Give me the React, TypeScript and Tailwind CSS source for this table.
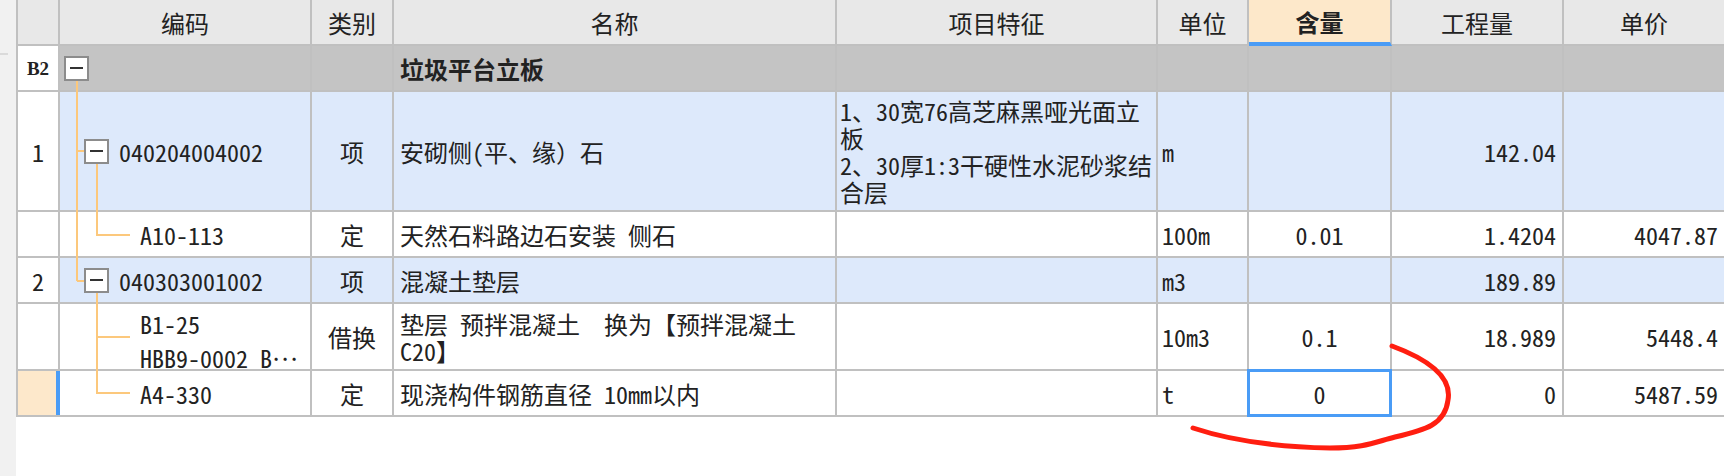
import React from "react";

const grid = "border-[#c0c0c0]";

function Cell({ className = "", children }: { className?: string; children?: React.ReactNode }) {
  return <div className={`h-full shrink-0 flex items-center border-r-2 ${grid} ${className}`}>{children}</div>;
}

function Minus() {
  return (
    <span className="w-[25px] h-[25px] shrink-0 border-2 border-[#8c8c8c] bg-white flex items-center justify-center">
      <span className="w-[13px] h-[2px] bg-[#333]" />
    </span>
  );
}

function RowNo({ children, active }: { children?: React.ReactNode; active?: boolean }) {
  if (active) {
    return <div className="h-full w-[44px] shrink-0 border-l-2 border-l-[#c0c0c0] border-r-4 border-r-[#4a9cf6] bg-[#fde8cb]" />;
  }
  return (
    <div className={`h-full w-[44px] shrink-0 border-l-2 border-r-2 ${grid} bg-white flex items-center justify-center`}>
      {children}
    </div>
  );
}

export default function App() {
  return (
    <div className="relative w-[1724px] h-[476px] overflow-hidden bg-white text-[#222] flex font-['Noto_Sans_Mono_CJK_SC','Noto_Sans_CJK_SC',sans-serif] text-[24px] leading-[27px]">
      <div className="w-[16px] shrink-0 bg-[#f1f1f1] flex flex-col">
        <div className="mt-[53px] h-[2px] w-[8px] bg-[#dadada]" />
      </div>

      <div className="flex-1 flex flex-col">
        {/* header */}
        <div className="flex h-[46px] bg-[#e8e8e8]">
          <div className={`h-full w-[44px] shrink-0 border-l-2 border-r-2 border-b-2 ${grid}`} />
          <Cell className="w-[252px] justify-center border-b-2">编码</Cell>
          <Cell className="w-[82px] justify-center border-b-2">类别</Cell>
          <Cell className="w-[443px] justify-center border-b-2">名称</Cell>
          <Cell className="w-[321px] justify-center border-b-2">项目特征</Cell>
          <Cell className="w-[91px] justify-center border-b-2">单位</Cell>
          <div className={`h-full w-[143px] shrink-0 flex items-center justify-center border-r-2 ${grid} border-b-4 border-b-[#4a9cf6] bg-[#fde8ca] font-bold`}>
            含量
          </div>
          <Cell className="w-[172px] justify-center border-b-2">工程量</Cell>
          <div className={`h-full flex-1 flex items-center justify-center border-b-2 ${grid}`}>单价</div>
        </div>

        {/* B2 group */}
        <div className={`flex h-[46px] border-b-2 ${grid} bg-[#c4c4c4]`}>
          <RowNo>
            <span className="font-['Liberation_Serif',serif] font-bold text-[19px]">B2</span>
          </RowNo>
          <Cell className="w-[252px] pl-[4px] border-[#bababa]">
            <Minus />
          </Cell>
          <Cell className="w-[82px] border-[#bababa]" />
          <Cell className="w-[443px] pl-[6px] font-bold border-[#bababa]">垃圾平台立板</Cell>
          <Cell className="w-[321px] border-[#bababa]" />
          <Cell className="w-[91px] border-[#bababa]" />
          <Cell className="w-[143px] border-[#bababa]" />
          <Cell className="w-[172px] border-[#bababa]" />
          <div className="h-full flex-1" />
        </div>

        {/* 1 */}
        <div className={`flex h-[120px] border-b-2 ${grid} bg-[#dde9fb]`}>
          <RowNo>1</RowNo>
          <Cell className="w-[252px] pl-[24px] gap-[10px]">
            <Minus />
            <span>040204004002</span>
          </Cell>
          <Cell className="w-[82px] justify-center">项</Cell>
          <Cell className="w-[443px] pl-[6px]">安砌侧(平、缘）石</Cell>
          <Cell className="w-[321px] pl-[3px]">
            <div className="whitespace-nowrap">
              <div className="h-[27px]">1、30宽76高芝麻黑哑光面立</div>
              <div className="h-[27px]">板</div>
              <div className="h-[27px]">2、30厚1:3干硬性水泥砂浆结</div>
              <div className="h-[27px]">合层</div>
            </div>
          </Cell>
          <Cell className="w-[91px] pl-[4px]">m</Cell>
          <Cell className="w-[143px]" />
          <Cell className="w-[172px] justify-end pr-[6px]">142.04</Cell>
          <div className="h-full flex-1" />
        </div>

        {/* A10-113 */}
        <div className={`flex h-[46px] border-b-2 ${grid} bg-white`}>
          <RowNo />
          <Cell className="w-[252px] pl-[80px]">A10-113</Cell>
          <Cell className="w-[82px] justify-center">定</Cell>
          <Cell className="w-[443px] pl-[6px]">天然石料路边石安装 侧石</Cell>
          <Cell className="w-[321px]" />
          <Cell className="w-[91px] pl-[4px]">100m</Cell>
          <Cell className="w-[143px] justify-center">0.01</Cell>
          <Cell className="w-[172px] justify-end pr-[6px]">1.4204</Cell>
          <div className="h-full flex-1 flex items-center justify-end pr-[6px]">4047.87</div>
        </div>

        {/* 2 */}
        <div className={`flex h-[46px] border-b-2 ${grid} bg-[#dde9fb]`}>
          <RowNo>2</RowNo>
          <Cell className="w-[252px] pl-[24px] gap-[10px]">
            <Minus />
            <span>040303001002</span>
          </Cell>
          <Cell className="w-[82px] justify-center">项</Cell>
          <Cell className="w-[443px] pl-[6px]">混凝土垫层</Cell>
          <Cell className="w-[321px]" />
          <Cell className="w-[91px] pl-[4px]">m3</Cell>
          <Cell className="w-[143px]" />
          <Cell className="w-[172px] justify-end pr-[6px]">189.89</Cell>
          <div className="h-full flex-1" />
        </div>

        {/* B1-25 */}
        <div className={`flex h-[67px] border-b-2 ${grid} bg-white`}>
          <RowNo />
          <Cell className="w-[252px] pl-[80px]">
            <div className="whitespace-nowrap">
              <div className="h-[27px]">B1-25</div>
              <div className="h-[27px]">
                HBB9-0002 B<span className="align-[0.3em]">…</span>
              </div>
            </div>
          </Cell>
          <Cell className="w-[82px] justify-center">借换</Cell>
          <Cell className="w-[443px] pl-[6px]">
            <div className="whitespace-pre">
              <div className="h-[27px]">垫层 预拌混凝土  换为【预拌混凝土</div>
              <div className="h-[27px]">C20】</div>
            </div>
          </Cell>
          <Cell className="w-[321px]" />
          <Cell className="w-[91px] pl-[4px]">10m3</Cell>
          <Cell className="w-[143px] justify-center">0.1</Cell>
          <Cell className="w-[172px] justify-end pr-[6px]">18.989</Cell>
          <div className="h-full flex-1 flex items-center justify-end pr-[6px]">5448.4</div>
        </div>

        {/* A4-330 */}
        <div className={`flex h-[46px] border-b-2 ${grid} bg-white`}>
          <RowNo active />
          <Cell className="w-[252px] pl-[80px]">A4-330</Cell>
          <Cell className="w-[82px] justify-center">定</Cell>
          <Cell className="w-[443px] pl-[6px]">现浇构件钢筋直径 10mm以内</Cell>
          <Cell className="w-[321px]" />
          <Cell className="w-[91px] pl-[4px]">t</Cell>
          <Cell className="relative w-[143px] justify-center">
            0
            <div className="absolute -top-[2px] -left-[2px] -right-[2px] -bottom-[2px] border-[3px] border-[#4a9cf6]" />
          </Cell>
          <Cell className="w-[172px] justify-end pr-[6px]">0</Cell>
          <div className="h-full flex-1 flex items-center justify-end pr-[6px]">5487.59</div>
        </div>
      </div>

      {/* tree connectors */}
      <svg className="absolute left-0 top-0 pointer-events-none" width="1724" height="476">
        <g stroke="#fcc87c" strokeWidth="2" fill="none">
          <path d="M77 81 V281" />
          <path d="M77 151 H84" />
          <path d="M77 281 H84" />
          <path d="M97 164 V235 H130" />
          <path d="M97 293 V393 H130" />
          <path d="M97 337 H130" />
        </g>
      </svg>

      {/* hand-drawn mark */}
      <svg className="absolute left-0 top-0 pointer-events-none" width="1724" height="476">
        <path
          d="M1392 346 C1430 360 1452 378 1448 400 C1445 425 1425 430 1395 437 C1375 442 1365 448 1330 448 C1280 447 1235 442 1193 428"
          stroke="#ff1e10"
          strokeWidth="5"
          strokeLinecap="round"
          fill="none"
        />
      </svg>
    </div>
  );
}
